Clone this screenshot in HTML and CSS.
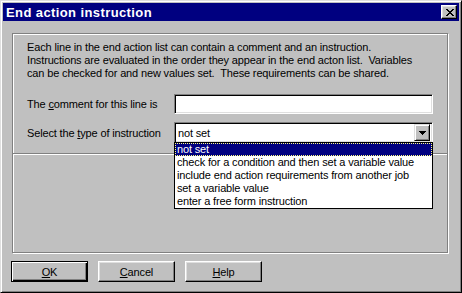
FILE: index.html
```html
<!DOCTYPE html>
<html>
<head>
<meta charset="utf-8">
<link rel="stylesheet" href="styles.css">
</head>
<body>
<div class="window">
  <div class="titlebar">
    <span class="title">End action instruction</span>
    <span class="close"><svg width="8" height="7" viewBox="0 0 8 7"><path d="M0 0h2v1h-2zM6 0h2v1h-2zM1 1h2v1h-2zM5 1h2v1h-2zM2 2h4v1h-4zM3 3h2v1h-2zM2 4h4v1h-4zM1 5h2v1h-2zM5 5h2v1h-2zM0 6h2v1h-2zM6 6h2v1h-2z" fill="#000"/></svg></span>
  </div>
  <div class="body">
    <div class="group">
      <div class="top">
        <p class="intro">Each line in the end action list can contain a comment and an instruction.<br>Instructions are evaluated in the order they appear in the end acton list.&nbsp; Variables<br>can be checked for and new values set.&nbsp; These requirements can be shared.</p>
        <div class="row row1">
          <span class="label">The <u>c</u>omment for this line is</span>
          <span class="edit"></span>
        </div>
        <div class="row row2">
          <span class="label">Select the <u>t</u>ype of instruction</span>
          <span class="combo"><span class="val">not set</span><span class="arrow"><svg width="7" height="4" viewBox="0 0 7 4"><path d="M0 0h7v1h-1v1h-1v1h-1v1h-1v-1h-1v-1h-1v-1h-1z" fill="#000"/></svg></span></span>
          <ul class="list">
            <li class="sel">not set</li>
            <li>check for a condition and then set a variable value</li>
            <li>include end action requirements from another job</li>
            <li>set a variable value</li>
            <li>enter a free form instruction</li>
          </ul>
        </div>
      </div>
      <div class="bottom"></div>
    </div>
    <div class="buttons">
      <span class="btn default"><span><u>O</u>K</span></span>
      <span class="btn"><span><u>C</u>ancel</span></span>
      <span class="btn"><span><u>H</u>elp</span></span>
    </div>
  </div>
</div>
</body>
</html>
```
FILE: styles.css
```css
* { box-sizing: border-box; }
html, body { margin: 0; padding: 0; background: #c0c0c0; }
body { font-family: "Liberation Sans", Arial, sans-serif; font-size: 11px; letter-spacing: -0.15px; color: #000; }
.window {
  width: 462px; height: 293px;
  background: #c0c0c0;
  border: 1px solid; border-color: #dfdfdf #000 #000 #dfdfdf;
  box-shadow: inset 1px 1px #fff, inset -1px -1px #808080;
  padding: 2px;
  display: flex; flex-direction: column;
}
.titlebar {
  height: 18px; background: #000080; color: #fff;
  display: flex; align-items: center; justify-content: space-between;
  padding: 0 2px 0 3px;
}
.title { font-weight: bold; font-size: 13px; letter-spacing: 0.4px; }
.close {
  width: 16px; height: 14px; background: #c0c0c0;
  border: 1px solid; border-color: #fff #000 #000 #fff;
  box-shadow: inset -1px -1px #808080, inset 1px 1px #dfdfdf;
  display: flex; align-items: center; justify-content: center;
  padding-left: 1px;
}
.close svg { display: block; }
.body { flex: 1; padding: 12px 12px 0 8px; }
.group {
  width: 436px; height: 220px;
  border: 1px solid #808080;
  box-shadow: inset 1px 1px #fff, 1px 1px #fff;
  margin-left: 1px;
  display: flex; flex-direction: column;
}
.top { height: 119px; padding: 7px 0 0 14px; position: relative; }
.bottom { border-top: 1px solid #808080; box-shadow: 0 1px #fff inset, 0 1px #fff; height: 0; }
.intro { margin: 0; line-height: 13px; }
.row { display: flex; align-items: center; }
.label { width: 147px; }
.row1 { margin-top: 14px; height: 20px; }
.row2 { margin-top: 8px; height: 21px; position: relative; }
.edit {
  width: 259px; height: 20px; background: #fff;
  border: 1px solid; border-color: #808080 #fff #fff #808080;
  box-shadow: inset 1px 1px #000, inset -1px -1px #dfdfdf;
}
.combo {
  width: 259px; height: 21px; background: #fff;
  border: 1px solid; border-color: #808080 #fff #fff #808080;
  box-shadow: inset 1px 1px #000, inset -1px -1px #dfdfdf;
  display: flex; align-items: center; justify-content: space-between;
  padding: 2px 2px 2px 3px;
}
.arrow {
  width: 16px; height: 17px; background: #c0c0c0;
  border: 1px solid; border-color: #dfdfdf #000 #000 #dfdfdf;
  box-shadow: inset 1px 1px #fff, inset -1px -1px #808080;
  display: flex; align-items: center; justify-content: center;
}
.arrow svg { display: block; }
.list {
  position: absolute; left: 147px; top: 20px;
  width: 259px; margin: 0; padding: 0; list-style: none;
  background: #fff; border: 1px solid #000;
}
.list li { height: 13px; line-height: 13px; padding-left: 2px; white-space: nowrap; }
.list li.sel { background: #000080; color: #fff; outline: 1px dotted #ffff80; outline-offset: -1px; }
.buttons { display: flex; gap: 10px; margin-top: 8px; }
.btn {
  width: 77px; height: 21px;
  border: 1px solid; border-color: #fff #000 #000 #fff;
  box-shadow: inset -1px -1px #808080, inset 1px 1px #dfdfdf;
  display: flex; align-items: center; justify-content: center;
}
.btn.default { border: 1px solid #000; box-shadow: inset 1px 1px #fff, inset -1px -1px #000, inset -2px -2px #808080; }
```
